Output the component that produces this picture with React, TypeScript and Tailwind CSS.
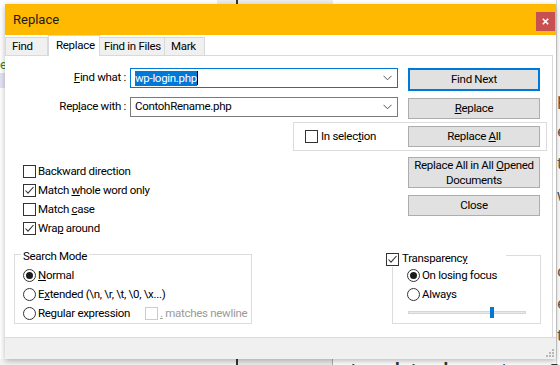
import React from 'react';

function Check({ checked = false, disabled = false }: { checked?: boolean; disabled?: boolean }) {
  return (
    <span
      className={`flex h-[13px] w-[13px] shrink-0 items-center justify-center border bg-white ${
        disabled ? 'border-[#cccccc]' : 'border-[#333333]'
      }`}
    >
      {checked && (
        <svg width="11" height="11" viewBox="0 0 11 11">
          <path d="M1.5 5.5 L4 8.2 L9.5 2" fill="none" stroke="#333333" strokeWidth="1.1" />
        </svg>
      )}
    </span>
  );
}

function Radio({ checked = false }: { checked?: boolean }) {
  return (
    <span className="flex h-[13px] w-[13px] shrink-0 items-center justify-center rounded-full border border-[#333333] bg-white">
      {checked && <span className="h-[7px] w-[7px] rounded-full bg-[#1a1a1a]" />}
    </span>
  );
}

function Btn({ children, primary = false, className = '' }: { children: React.ReactNode; primary?: boolean; className?: string }) {
  return (
    <button
      className={`flex w-[132px] shrink-0 items-center justify-center bg-[#e1e1e1] text-center leading-[15px] text-black ${
        primary ? 'border-2 border-[#0078d7]' : 'border border-[#adadad]'
      } ${className}`}
    >
      {children}
    </button>
  );
}

function Chevron() {
  return (
    <svg width="9" height="6" viewBox="0 0 9 6" className="shrink-0">
      <path d="M0.5 0.8 L4.5 4.8 L8.5 0.8" fill="none" stroke="#555555" strokeWidth="1" />
    </svg>
  );
}

function Row({ children }: { children: React.ReactNode }) {
  return <div className="flex h-[19px] items-center gap-[2px]">{children}</div>;
}

export default function App() {
  return (
    <div className="relative h-[365px] w-[560px] overflow-hidden whitespace-nowrap bg-white font-[family-name:Roboto,'Liberation_Sans',sans-serif] text-[11.5px] tracking-[-0.3px] text-black">
      {/* editor behind the dialog */}
      <div className="absolute left-[217px] top-0 h-[4px] w-[116px] bg-[#ececec]" />
      <div className="absolute left-[236px] top-0 h-[4px] w-[2px] bg-[#333333]" />
      <div className="absolute left-0 top-[73px] h-[15px] w-[6px] bg-[#e3e3f3]" />
      <div className="absolute left-0 top-[58px] text-[13px] leading-[14px] text-[#2a8a2a]">e</div>
      <div className="absolute left-[556px] top-0 h-full w-px bg-[#d6d6d6]" />
      <div className="absolute left-[557px] top-[88px] flex flex-col gap-[10px] font-[family-name:'Open_Sans',sans-serif] text-[17px] leading-[22px] tracking-normal text-[#555555]">
        <span>p</span>
        <span>e</span>
        <span>t</span>
        <span>w</span>
        <span className="mt-[44px]">c</span>
        <span>e</span>
        <span>t</span>
      </div>
      <div className="absolute left-0 top-[359px] h-[6px] w-[236px] bg-[#f4f4f4]" />
      <div className="absolute left-[236px] top-[359px] h-[6px] w-[2px] bg-[#333333]" />
      <div className="absolute left-[238px] top-[359px] h-[6px] w-[94px] bg-[#ececec]" />
      <div className="absolute left-[332px] top-[359px] h-[6px] w-px bg-[#b0b0b0]" />
      <div className="absolute left-[350px] top-[359px] flex gap-[8px] font-[family-name:'Open_Sans',sans-serif] text-[17px] leading-[22px] tracking-normal text-[#333333]">
        <b>template.php</b>
        <span>terdapat</span>
        <span>5</span>
      </div>

      {/* dialog */}
      <div className="absolute left-[5px] top-[4px] flex h-[355px] w-[551px] flex-col bg-white shadow-[0_2px_6px_rgba(0,0,0,0.28)]">
        <div className="flex h-[31px] shrink-0 items-center justify-between bg-[#ffb900] pl-[8px]">
          <span className="text-[13px] tracking-normal text-[#1a1a1a]">Replace</span>
          <div className="mr-px mt-[4px] flex h-[19px] w-[19px] items-center justify-center bg-[#c75050]">
            <svg width="7" height="7" viewBox="0 0 7 7">
              <path d="M0.8 0.8 L6.2 6.2 M6.2 0.8 L0.8 6.2" stroke="#ffffff" strokeWidth="1.6" />
            </svg>
          </div>
        </div>

        <div className="flex h-[20px] shrink-0 items-end">
          <div className="flex h-[18px] w-[43px] items-center border border-b-0 border-[#d9d9d9] bg-[#f0f0f0] pl-[6px]">Find</div>
          <div className="relative z-10 -mb-px flex h-[21px] w-[52px] items-center border border-b-0 border-[#d9d9d9] bg-white pl-[7px]">Replace</div>
          <div className="flex h-[18px] w-[65px] items-center border border-b-0 border-l-0 border-[#d9d9d9] bg-[#f0f0f0] pl-[4px]">Find in Files</div>
          <div className="flex h-[18px] w-[40px] items-center border border-b-0 border-l-0 border-[#d9d9d9] bg-[#f0f0f0] pl-[6px]">Mark</div>
        </div>

        <div className="mr-[3px] flex-1 overflow-hidden border-r border-t border-[#d9d9d9] pt-[12px]">
          <div className="flex items-start">
            <div className="flex h-[20px] w-[121px] items-center justify-end">
              <span>
                <u>F</u>ind what :
              </span>
            </div>
            <div className="ml-[4px] flex h-[20px] w-[268px] items-center border border-[#0078d7] bg-white pl-[4px] pr-[5px]">
              <span className="bg-[#0078d7] leading-[15px] text-white">wp-login.php</span>
              <span className="h-[14px] w-px bg-black" />
              <span className="flex-1" />
              <Chevron />
            </div>
            <Btn primary className="ml-[10px] h-[23px]">
              Find Next
            </Btn>
          </div>

          <div className="mt-[6px] flex items-start">
            <div className="flex h-[20px] w-[121px] items-center justify-end">
              <span>
                Rep<u>l</u>ace with :
              </span>
            </div>
            <div className="ml-[4px] flex h-[20px] w-[268px] items-center border border-[#7a7a7a] bg-white pl-[4px] pr-[5px]">
              <span className="flex-1">ContohRename.php</span>
              <Chevron />
            </div>
            <Btn className="ml-[10px] mt-px h-[21px]">
              <span>
                <u>R</u>eplace
              </span>
            </Btn>
          </div>

          <div className="ml-[288px] mt-[3px] flex h-[29px] w-[254px] items-center border border-[#dcdcdc] pl-[11px] pr-[6px]">
            <div className="flex items-center gap-[3px]">
              <Check />
              <span>
                In selec<u>t</u>ion
              </span>
            </div>
            <Btn className="ml-auto h-[21px]">
              <span>
                Replace <u>A</u>ll
              </span>
            </Btn>
          </div>

          <div className="flex items-start">
            <div className="flex w-[403px] flex-col pl-[18px] pt-[11px]">
              <Row>
                <Check />
                <span>Backward direction</span>
              </Row>
              <Row>
                <Check checked />
                <span>
                  Match <u>w</u>hole word only
                </span>
              </Row>
              <Row>
                <Check />
                <span>
                  Match <u>c</u>ase
                </span>
              </Row>
              <Row>
                <Check checked />
                <span>
                  Wra<u>p</u> around
                </span>
              </Row>
            </div>
            <div className="flex flex-col gap-[7px] pt-[6px]">
              <Btn className="h-[31px]">
                <span>
                  Replace All in All <u>O</u>pened
                  <br />
                  Documents
                </span>
              </Btn>
              <Btn className="h-[21px]">Close</Btn>
            </div>
          </div>

          <div className="mt-[16px] flex items-start">
            <div className="relative ml-[9px] h-[70px] w-[238px] border border-[#dcdcdc] pl-[8px] pt-[11px]">
              <span className="absolute -top-[7px] left-[6px] bg-white px-[2px] leading-[16px]">Search Mode</span>
              <Row>
                <Radio checked />
                <span>
                  <u>N</u>ormal
                </span>
              </Row>
              <Row>
                <Radio />
                <span>
                  E<u>x</u>tended (\n, \r, \t, \0, \x...)
                </span>
              </Row>
              <div className="flex h-[19px] items-center">
                <div className="flex w-[122px] items-center gap-[2px]">
                  <Radio />
                  <span>
                    Re<u>g</u>ular expression
                  </span>
                </div>
                <div className="flex items-center gap-[2px] text-[#9a9a9a]">
                  <Check disabled />
                  <span>
                    <u>.</u> matches newline
                  </span>
                </div>
              </div>
            </div>

            <div className="relative ml-[140px] mt-px h-[69px] w-[149px] border border-[#dcdcdc] pl-[14px] pt-[10px]">
              <div className="absolute -left-[7px] -top-[5px] flex h-[16px] w-[120px] items-center gap-[3px] bg-white">
                <Check checked />
                <span>
                  Transparenc<u>y</u>
                </span>
              </div>
              <Row>
                <Radio checked />
                <span>On losing focus</span>
              </Row>
              <Row>
                <Radio />
                <span>Always</span>
              </Row>
              <div className="relative ml-px mt-[3px] flex h-[11px] w-[118px] items-center">
                <div className="h-[3px] w-full border border-[#d6d6d6] bg-[#e7eaea]" />
                <div className="absolute left-[82px] top-0 h-[11px] w-[4px] bg-[#0078d7]" />
              </div>
            </div>
          </div>
        </div>

        <div className="relative h-[22px] shrink-0 border-t border-[#dadada] bg-[#f0f0f0]">
          <svg width="9" height="9" viewBox="0 0 9 9" className="absolute bottom-[2px] right-[2px]">
            <rect x="7" y="1" width="2" height="2" fill="#b8b8b8" />
            <rect x="4" y="4" width="2" height="2" fill="#b8b8b8" />
            <rect x="7" y="4" width="2" height="2" fill="#b8b8b8" />
            <rect x="1" y="7" width="2" height="2" fill="#b8b8b8" />
            <rect x="4" y="7" width="2" height="2" fill="#b8b8b8" />
            <rect x="7" y="7" width="2" height="2" fill="#b8b8b8" />
          </svg>
        </div>
      </div>
    </div>
  );
}
